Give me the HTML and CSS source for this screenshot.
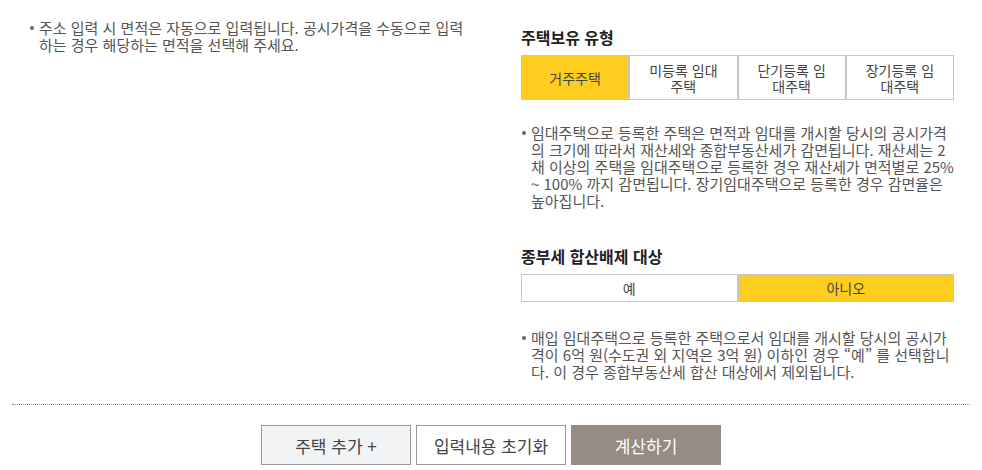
FILE: index.html
```html
<!DOCTYPE html>
<html lang="ko">
<head>
    <meta charset="UTF-8">
    <meta name="viewport" content="width=device-width, initial-scale=1.0">
    <title>주택 정보 입력</title>
    <link rel="stylesheet" href="styles.css">
</head>
<body>
    <div class="wrap">
        <div class="form-row">
            <div class="col-left">
                <ul class="notes">
                    <li>주소 입력 시 면적은 자동으로 입력됩니다. 공시가격을 수동으로 입력하는 경우 해당하는 면적을 선택해 주세요.</li>
                </ul>
            </div>
            <div class="col-right">
                <h3 class="field-title">주택보유 유형</h3>
                <div class="toggle toggle-4">
                    <button class="on">거주주택</button>
                    <button>미등록 임대주택</button>
                    <button>단기등록 임대주택</button>
                    <button>장기등록 임대주택</button>
                </div>
                <ul class="notes">
                    <li>임대주택으로 등록한 주택은 면적과 임대를 개시할 당시의 공시가격의 크기에 따라서 재산세와 종합부동산세가 감면됩니다. 재산세는 2채 이상의 주택을 임대주택으로 등록한 경우 재산세가 면적별로 25% ~ 100% 까지 감면됩니다. 장기임대주택으로 등록한 경우 감면율은 높아집니다.</li>
                </ul>

                <h3 class="field-title second">종부세 합산배제 대상</h3>
                <div class="toggle toggle-2">
                    <button>예</button>
                    <button class="on">아니오</button>
                </div>
                <ul class="notes">
                    <li>매입 임대주택으로 등록한 주택으로서 임대를 개시할 당시의 공시가격이 6억 원(수도권 외 지역은 3억 원) 이하인 경우 “예” 를 선택합니다. 이 경우 종합부동산세 합산 대상에서 제외됩니다.</li>
                </ul>
            </div>
        </div>
        <div class="actions">
            <button class="btn btn-add">주택 추가 +</button>
            <button class="btn btn-reset">입력내용 초기화</button>
            <button class="btn btn-calc">계산하기</button>
        </div>
    </div>
</body>
</html>
```

FILE: styles.css
```css
body {
    margin: 0;
    font-family: "Noto Sans CJK KR", sans-serif;
    color: #555;
    background: #fff;
}
.wrap {
    padding: 0 12px;
}
.form-row {
    display: grid;
    grid-template-columns: 1fr 433px;
    padding: 19px 16px 24px 0;
    border-bottom: 1px dotted #8a8a8a;
}
.col-left {
    padding: 0 50px 0 17px;
}
.notes {
    list-style: none;
    margin: 0;
    padding: 0;
    font-size: 15px;
    line-height: 17px;
    color: #555;
}
.notes li {
    position: relative;
    padding-left: 10px;
}
.notes li::before {
    content: "";
    position: absolute;
    left: 1px;
    top: 7px;
    width: 4px;
    height: 4px;
    border-radius: 50%;
    background: #666;
}
.field-title {
    margin: 8px 0 8px;
    font-size: 16px;
    line-height: 20px;
    font-weight: bold;
    color: #222;
}
.field-title.second {
    margin-top: 37px;
}
.toggle {
    display: grid;
    margin-bottom: 24px;
}
.toggle-4 {
    grid-template-columns: repeat(4, 1fr);
}
.toggle-2 {
    grid-template-columns: repeat(2, 1fr);
    margin-bottom: 27px;
}
.toggle button {
    display: flex;
    align-items: center;
    justify-content: center;
    text-align: center;
    margin: 0;
    padding: 0 14px;
    border: 1px solid #c6c6c6;
    background: #fff;
    font-family: inherit;
    font-size: 14px;
    line-height: 16px;
    color: #444;
    cursor: pointer;
}
.toggle-4 button {
    height: 45px;
}
.toggle-2 button {
    height: 28px;
}
.toggle button.on {
    background: #ffcd1f;
}
.actions {
    display: flex;
    justify-content: center;
    gap: 5px;
    padding-top: 20px;
}
.btn {
    width: 150px;
    height: 40px;
    border: 1px solid #999;
    font-family: inherit;
    font-size: 17px;
    color: #444;
    cursor: pointer;
}
.btn-add {
    background: #f2f3f5;
}
.btn-reset {
    background: #fff;
}
.btn-calc {
    background: #968b85;
    border-color: #968b85;
    color: #fff;
}
```
